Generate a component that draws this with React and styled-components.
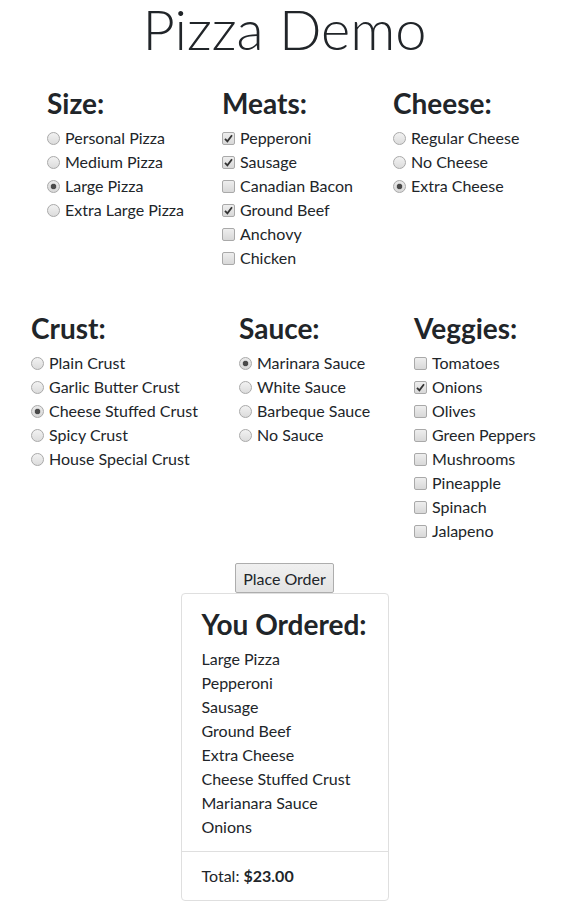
import React from 'react';
import styled, { createGlobalStyle } from 'styled-components';

const GlobalStyle = createGlobalStyle`
  body {
    margin: 0;
    background: #fff;
    color: #212529;
    font-family: Lato, "Open Sans", sans-serif;
    font-size: 16px;
    line-height: 24px;
  }
`;

const Page = styled.div`
  width: 569px;
  display: flex;
  flex-direction: column;
  align-items: center;
`;

const Title = styled.h1`
  margin: 0;
  padding-top: 3px;
  font-size: 56px;
  font-weight: 300;
  line-height: 52px;
  color: #212529;
`;

const Row = styled.div`
  align-self: stretch;
  display: grid;
  grid-template-columns: ${p => p.$cols};
  padding-left: ${p => p.$left}px;
  margin-top: ${p => p.$top}px;
`;

const Group = styled.div`
  display: flex;
  flex-direction: column;
`;

const Heading = styled.h3`
  margin: 0 0 6px;
  padding-top: 2px;
  font-size: 28px;
  font-weight: 700;
  line-height: 34px;
  color: #212529;
`;

const Option = styled.label`
  display: flex;
  align-items: center;
  height: 24px;
  white-space: nowrap;
`;

const Radio = styled.span`
  width: 13px;
  height: 13px;
  box-sizing: border-box;
  border-radius: 50%;
  border: 1px solid #a9a9a9;
  margin-right: 5px;
  flex: none;
  background: ${p =>
    p.$on
      ? 'radial-gradient(circle, #4a4a4a 0 2.5px, #c8c8c8 3px, transparent 3.6px), linear-gradient(#eaeaea, #d8d8d8)'
      : 'linear-gradient(#f2f2f2, #dcdcdc)'};
`;

const Box = styled.span`
  width: 13px;
  height: 13px;
  box-sizing: border-box;
  border-radius: 2px;
  border: 1px solid #a9a9a9;
  margin-right: 5px;
  flex: none;
  display: flex;
  align-items: center;
  justify-content: center;
  background: linear-gradient(#eeeeee, #d8d8d8);
`;

const OrderButton = styled.button`
  margin-top: 20px;
  height: 30px;
  padding: 0 7px;
  font-family: inherit;
  font-size: 16px;
  color: #212529;
  border: 1px solid #adadad;
  border-radius: 2px;
  background: linear-gradient(#f0f0f0, #e3e3e3);
`;

const Card = styled.div`
  width: 208px;
  box-sizing: border-box;
  border: 1px solid #dfdfdf;
  border-radius: 4px;
`;

const CardBody = styled.div`
  padding: 11px 20px 12px;
`;

const CardFooter = styled.div`
  border-top: 1px solid #dfdfdf;
  padding: 12px 20px;
`;

const Item = styled.div`
  line-height: 24px;
`;

const Check = () => (
  <svg width="9" height="9" viewBox="0 0 9 9">
    <path d="M1 4.8 L3.4 7.3 L8 1.2" fill="none" stroke="#333" strokeWidth="1.8" />
  </svg>
);

const Choice = ({ type, label, on }) => (
  <Option>
    {type === 'radio' ? <Radio $on={on} /> : <Box>{on && <Check />}</Box>}
    {label}
  </Option>
);

const groups = {
  size: ['Personal Pizza', 'Medium Pizza', 'Large Pizza', 'Extra Large Pizza'],
  meats: ['Pepperoni', 'Sausage', 'Canadian Bacon', 'Ground Beef', 'Anchovy', 'Chicken'],
  cheese: ['Regular Cheese', 'No Cheese', 'Extra Cheese'],
  crust: ['Plain Crust', 'Garlic Butter Crust', 'Cheese Stuffed Crust', 'Spicy Crust', 'House Special Crust'],
  sauce: ['Marinara Sauce', 'White Sauce', 'Barbeque Sauce', 'No Sauce'],
  veggies: ['Tomatoes', 'Onions', 'Olives', 'Green Peppers', 'Mushrooms', 'Pineapple', 'Spinach', 'Jalapeno'],
};

const selected = [
  'Large Pizza', 'Pepperoni', 'Sausage', 'Ground Beef', 'Extra Cheese',
  'Cheese Stuffed Crust', 'Marinara Sauce', 'Onions',
];

const Section = ({ title, type, items }) => (
  <Group>
    <Heading>{title}</Heading>
    {items.map(i => (
      <Choice key={i} type={type} label={i} on={selected.includes(i)} />
    ))}
  </Group>
);

const ordered = [
  'Large Pizza', 'Pepperoni', 'Sausage', 'Ground Beef', 'Extra Cheese',
  'Cheese Stuffed Crust', 'Marianara Sauce', 'Onions',
];

const App = () => (
  <Page>
    <GlobalStyle />
    <Title>Pizza Demo</Title>
    <Row $cols="175px 171px auto" $left={47} $top={29}>
      <Section title="Size:" type="radio" items={groups.size} />
      <Section title="Meats:" type="checkbox" items={groups.meats} />
      <Section title="Cheese:" type="radio" items={groups.cheese} />
    </Row>
    <Row $cols="208px 175px auto" $left={31} $top={39}>
      <Section title="Crust:" type="radio" items={groups.crust} />
      <Section title="Sauce:" type="radio" items={groups.sauce} />
      <Section title="Veggies:" type="checkbox" items={groups.veggies} />
    </Row>
    <OrderButton>Place Order</OrderButton>
    <Card>
      <CardBody>
        <Heading>You Ordered:</Heading>
        {ordered.map(o => <Item key={o}>{o}</Item>)}
      </CardBody>
      <CardFooter>
        Total: <b>$23.00</b>
      </CardFooter>
    </Card>
  </Page>
);

export default App;
